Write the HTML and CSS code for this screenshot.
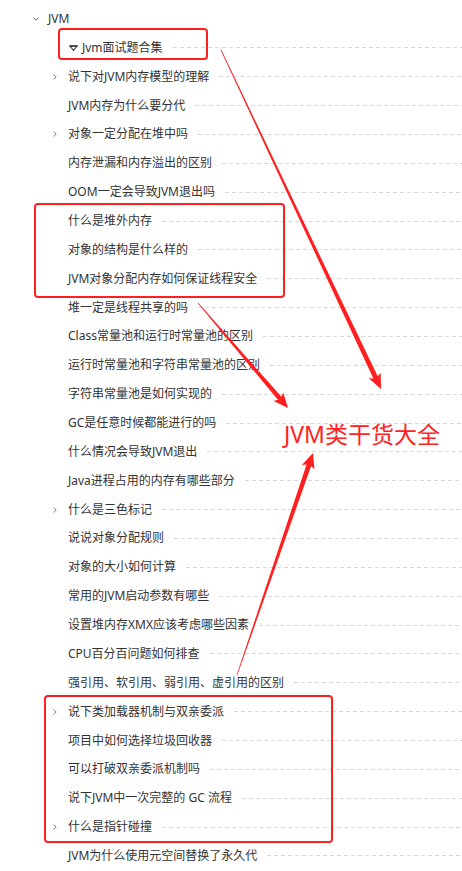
FILE: index.html
```html
<!DOCTYPE html>
<html lang="zh-CN">
<head>
<meta charset="utf-8">
<title>JVM</title>
<link rel="stylesheet" href="styles.css">
</head>
<body>
<div class="page">
  <div class="outline">
    <div class="row root">
      <span class="toggle"><svg width="6" height="4" viewBox="0 0 6 4"><path d="M0.5 0.6 L3 3.2 L5.5 0.6" fill="none" stroke="#666" stroke-width="1"/></svg></span>
      <span class="label">JVM</span>
    </div>
    <div class="children">
      <div class="row"><span class="toggle"></span><span class="icon"><svg width="9" height="6" viewBox="0 0 9 6"><path d="M0.8 0.9 H8.2 L4.5 5.3 Z" fill="none" stroke="#444" stroke-width="1.1" stroke-linejoin="round"/><rect x="0.5" y="0.3" width="8" height="1.6" fill="#444"/></svg></span><span class="label">Jvm面试题合集</span><span class="leader"></span></div>
      <div class="row"><span class="toggle"><svg width="4" height="6" viewBox="0 0 4 6"><path d="M0.7 0.5 L3.2 3 L0.7 5.5" fill="none" stroke="#777" stroke-width="1"/></svg></span><span class="label">说下对JVM内存模型的理解</span><span class="leader"></span></div>
      <div class="row"><span class="toggle"></span><span class="label">JVM内存为什么要分代</span><span class="leader"></span></div>
      <div class="row"><span class="toggle"><svg width="4" height="6" viewBox="0 0 4 6"><path d="M0.7 0.5 L3.2 3 L0.7 5.5" fill="none" stroke="#777" stroke-width="1"/></svg></span><span class="label">对象一定分配在堆中吗</span><span class="leader"></span></div>
      <div class="row"><span class="toggle"></span><span class="label">内存泄漏和内存溢出的区别</span><span class="leader"></span></div>
      <div class="row"><span class="toggle"></span><span class="label">OOM一定会导致JVM退出吗</span><span class="leader"></span></div>
      <div class="row"><span class="toggle"></span><span class="label">什么是堆外内存</span><span class="leader"></span></div>
      <div class="row"><span class="toggle"></span><span class="label">对象的结构是什么样的</span><span class="leader"></span></div>
      <div class="row"><span class="toggle"></span><span class="label">JVM对象分配内存如何保证线程安全</span><span class="leader"></span></div>
      <div class="row"><span class="toggle"></span><span class="label">堆一定是线程共享的吗</span><span class="leader"></span></div>
      <div class="row"><span class="toggle"></span><span class="label">Class常量池和运行时常量池的区别</span><span class="leader"></span></div>
      <div class="row"><span class="toggle"></span><span class="label">运行时常量池和字符串常量池的区别</span><span class="leader"></span></div>
      <div class="row"><span class="toggle"></span><span class="label">字符串常量池是如何实现的</span><span class="leader"></span></div>
      <div class="row"><span class="toggle"></span><span class="label">GC是任意时候都能进行的吗</span><span class="leader"></span></div>
      <div class="row"><span class="toggle"></span><span class="label">什么情况会导致JVM退出</span><span class="leader"></span></div>
      <div class="row"><span class="toggle"></span><span class="label">Java进程占用的内存有哪些部分</span><span class="leader"></span></div>
      <div class="row"><span class="toggle"><svg width="4" height="6" viewBox="0 0 4 6"><path d="M0.7 0.5 L3.2 3 L0.7 5.5" fill="none" stroke="#777" stroke-width="1"/></svg></span><span class="label">什么是三色标记</span><span class="leader"></span></div>
      <div class="row"><span class="toggle"></span><span class="label">说说对象分配规则</span><span class="leader"></span></div>
      <div class="row"><span class="toggle"></span><span class="label">对象的大小如何计算</span><span class="leader"></span></div>
      <div class="row"><span class="toggle"></span><span class="label">常用的JVM启动参数有哪些</span><span class="leader"></span></div>
      <div class="row"><span class="toggle"></span><span class="label">设置堆内存XMX应该考虑哪些因素</span><span class="leader"></span></div>
      <div class="row"><span class="toggle"></span><span class="label">CPU百分百问题如何排查</span><span class="leader"></span></div>
      <div class="row"><span class="toggle"></span><span class="label">强引用、软引用、弱引用、虚引用的区别</span><span class="leader"></span></div>
      <div class="row"><span class="toggle"><svg width="4" height="6" viewBox="0 0 4 6"><path d="M0.7 0.5 L3.2 3 L0.7 5.5" fill="none" stroke="#777" stroke-width="1"/></svg></span><span class="label">说下类加载器机制与双亲委派</span><span class="leader"></span></div>
      <div class="row"><span class="toggle"></span><span class="label">项目中如何选择垃圾回收器</span><span class="leader"></span></div>
      <div class="row"><span class="toggle"></span><span class="label">可以打破双亲委派机制吗</span><span class="leader"></span></div>
      <div class="row"><span class="toggle"></span><span class="label">说下JVM中一次完整的 GC 流程</span><span class="leader"></span></div>
      <div class="row"><span class="toggle"><svg width="4" height="6" viewBox="0 0 4 6"><path d="M0.7 0.5 L3.2 3 L0.7 5.5" fill="none" stroke="#777" stroke-width="1"/></svg></span><span class="label">什么是指针碰撞</span><span class="leader"></span></div>
      <div class="row"><span class="toggle"></span><span class="label">JVM为什么使用元空间替换了永久代</span><span class="leader"></span></div>
    </div>
  </div>

  <div class="box box-1"></div>
  <div class="box box-2"></div>
  <div class="box box-3"></div>

  <svg class="arrows" width="462" height="871" viewBox="0 0 462 871">
    <g fill="#ff1f1f">
      <g transform="translate(221 50) rotate(64.73)">
        <polygon points="0,-0.35 362,-2.4 360,-6.6 375,0 360,6.6 362,2.4 0,0.35"/>
      </g>
      <g transform="translate(198 303) rotate(49.4)">
        <polygon points="0,-0.35 125.5,-2.3 123.5,-6.4 138.3,0 123.5,6.4 125.5,2.3 0,0.35"/>
      </g>
      <g transform="translate(237 675) rotate(-71.1)">
        <polygon points="0,-0.35 221.8,-2.4 219.8,-6.6 234.6,0 219.8,6.6 221.8,2.4 0,0.35"/>
      </g>
    </g>
  </svg>

  <div class="callout">JVM类干货大全</div>
</div>
</body>
</html>
```

FILE: styles.css
```css
html, body {
  margin: 0;
  padding: 0;
  background: #ffffff;
}

.page {
  position: relative;
  width: 462px;
  height: 871px;
  overflow: hidden;
  font-family: "Noto Sans", "Noto Sans CJK SC", sans-serif;
  font-size: 12px;
  color: #333333;
}

.outline {
  padding-top: 4.6px;
  padding-left: 30px;
}

.children {
  padding-left: 20px;
}

.row {
  display: flex;
  align-items: center;
  height: 28.86px;
  white-space: nowrap;
}

.toggle {
  flex: 0 0 18px;
  width: 18px;
  display: flex;
  align-items: center;
  padding-left: 3px;
  box-sizing: border-box;
}

.toggle svg {
  display: block;
}

.icon {
  display: flex;
  align-items: center;
  margin-left: 1px;
  margin-right: 4px;
}

.icon svg {
  display: block;
}

.label {
  line-height: 16px;
}

.leader {
  flex: 1 1 auto;
  height: 1px;
  margin-left: 10px;
  background: repeating-linear-gradient(90deg, #d8d8d8 0 4px, transparent 4px 7px);
}

.box {
  position: absolute;
  border: 2.7px solid #ff1f1f;
  border-radius: 4px;
  box-sizing: border-box;
}

.box-1 {
  left: 58px;
  top: 28px;
  width: 150px;
  height: 32px;
}

.box-2 {
  left: 34px;
  top: 203px;
  width: 251px;
  height: 95px;
}

.box-3 {
  left: 44px;
  top: 695px;
  width: 289px;
  height: 148px;
}

.arrows {
  position: absolute;
  left: 0;
  top: 0;
  pointer-events: none;
}

.callout {
  position: absolute;
  left: 284px;
  top: 423px;
  font-size: 23px;
  line-height: 23px;
  color: #ff2222;
  white-space: nowrap;
}
```
